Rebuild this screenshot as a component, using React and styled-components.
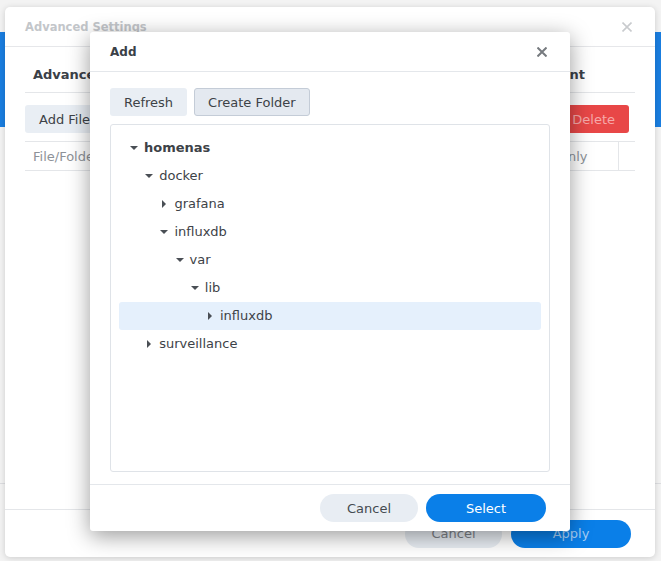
import React from 'react'
import styled, { createGlobalStyle } from 'styled-components'

const GlobalStyle = createGlobalStyle`
  html, body {
    margin: 0;
    padding: 0;
  }
  body {
    font-family: "DejaVu Sans", Verdana, sans-serif;
    font-size: 13px;
    color: #3d4247;
    background: #f3f3f3;
  }
`

const Desktop = styled.div`
  position: relative;
  width: 661px;
  height: 561px;
  overflow: hidden;
  background: #f3f3f3;
`

const Backdrop = styled.div`
  display: flex;
  flex-direction: column;
  height: 100%;
  padding-top: 32px;
  box-sizing: border-box;
`

const BlueBand = styled.div`
  height: 95px;
  background: #1a7ee0;
`

const BackdropRule = styled.div`
  margin-top: 356px;
  border-top: 1px solid #dcdde0;
`

const Window = styled.div`
  position: absolute;
  left: 5px;
  top: 7px;
  width: 650px;
  height: 550px;
  background: #fff;
  border-radius: 5px;
  box-shadow: 0 1px 6px rgba(0, 0, 0, 0.16);
  display: flex;
  flex-direction: column;
  overflow: hidden;
`

const WindowHeader = styled.div`
  height: 40px;
  box-sizing: border-box;
  border-bottom: 1px solid #e6e7ea;
  display: flex;
  align-items: center;
  justify-content: space-between;
  padding: 1px 23px 0 20px;
  flex-shrink: 0;
`

const WindowTitle = styled.div`
  font-size: 11.5px;
  font-weight: bold;
  color: #c3c6ca;
`

const WindowBody = styled.div`
  flex: 1;
  display: flex;
  flex-direction: column;
  padding: 0 20px;
`

const Tabs = styled.div`
  display: flex;
  justify-content: space-between;
  padding: 20px 50px 9px 8px;
  line-height: 16px;
  border-bottom: 1px solid #e4e6e9;
  font-weight: bold;
  color: #3a4047;
`

const Toolbar = styled.div`
  display: flex;
  justify-content: space-between;
  padding: 12px 6px 8px 0;
  border-bottom: 1px solid #e4e6e9;
`

const ToolGroup = styled.div`
  display: flex;
  gap: 7px;
`

const Button = styled.button`
  height: 28px;
  box-sizing: border-box;
  padding: 0 ${p => (p.$outlined ? 13 : 14)}px;
  border: ${p => (p.$outlined ? '1px solid #c4ccd7' : '0')};
  border-radius: 3px;
  font-family: inherit;
  font-size: 13px;
  background: ${p => (p.$danger ? '#e84747' : p.$outlined ? '#e4e9f0' : '#e9eef4')};
  color: ${p => (p.$danger ? '#f6a9a9' : '#3d4247')};
`

const GridHeader = styled.div`
  display: flex;
  height: 29px;
  box-sizing: border-box;
  border-bottom: 1px solid #e4e6e9;
  color: #8d9298;
`

const Cell = styled.div`
  flex: ${p => (p.$w ? `0 0 ${p.$w}px` : 1)};
  box-sizing: border-box;
  padding: 1px 8px 0;
  line-height: 28px;
  white-space: nowrap;
  overflow: hidden;
  border-left: ${p => (p.$divider ? '1px solid #e4e6e9' : '0')};
`

const Spacer = styled.div`
  flex: 1;
`

const WindowFooter = styled.div`
  height: 48px;
  box-sizing: border-box;
  border-top: 1px solid #e4e6e9;
  display: flex;
  justify-content: flex-end;
  align-items: center;
  gap: 9px;
  padding: 0 24px;
  flex-shrink: 0;
`

const Pill = styled.button`
  width: ${p => p.$w}px;
  height: 28px;
  border: 0;
  border-radius: 14px;
  font-family: inherit;
  font-size: 13px;
  background: ${p => (p.$primary ? '#0a7fe8' : '#e8edf3')};
  color: ${p => p.$color || (p.$primary ? '#fff' : '#444a50')};
`

const Modal = styled.div`
  position: absolute;
  left: 90px;
  top: 32px;
  width: 480px;
  height: 499px;
  background: #fff;
  border-radius: 3px;
  box-shadow: 0 5px 22px rgba(0, 0, 0, 0.4);
  display: flex;
  flex-direction: column;
`

const ModalHeader = styled(WindowHeader)`
  border-bottom-color: #e4e7eb;
`

const ModalTitle = styled.div`
  font-size: 12px;
  font-weight: bold;
  color: #3a4047;
`

const ModalBody = styled.div`
  flex: 1;
  min-height: 0;
  display: flex;
  flex-direction: column;
  gap: 8px;
  padding: 16px 20px 12px;
`

const TreeBox = styled.div`
  flex: 1;
  border: 1px solid #dfe3e8;
  border-radius: 3px;
  padding: 9px 0 7px;
`

const TreeRow = styled.div`
  display: flex;
  align-items: center;
  height: 28px;
  margin: 0 8px;
  padding-left: ${p => 11 + p.$level * 15.2}px;
  border-radius: 3px;
  background: ${p => (p.$selected ? '#e5f0fc' : 'transparent')};
`

const Caret = styled.span`
  width: 8px;
  display: flex;
  justify-content: center;
  margin-right: 6px;

  &::before {
    content: '';
    display: block;
    width: 0;
    height: 0;
    ${p => (p.$open
      ? `border-left: 4px solid transparent;
         border-right: 4px solid transparent;
         border-top: 4px solid #4a4f55;`
      : `border-top: 4px solid transparent;
         border-bottom: 4px solid transparent;
         border-left: 4px solid #4a4f55;`)}
  }
`

const Label = styled.span`
  font-weight: ${p => (p.$root ? 'bold' : 'normal')};
  color: #3d4247;
  line-height: 16px;
`

const ModalFooter = styled.div`
  height: 47px;
  box-sizing: border-box;
  border-top: 1px solid #e4e7eb;
  display: flex;
  justify-content: flex-end;
  align-items: center;
  gap: 8px;
  padding: 0 24px;
`

const CloseIcon = ({ color, width }) => (
  <svg width="10" height="10" viewBox="0 0 10 10">
    <path d="M0.5 0.5 L9.5 9.5 M9.5 0.5 L0.5 9.5" stroke={color} strokeWidth={width} />
  </svg>
)

const tree = [
  { name: 'homenas', level: 0, open: true },
  { name: 'docker', level: 1, open: true },
  { name: 'grafana', level: 2 },
  { name: 'influxdb', level: 2, open: true },
  { name: 'var', level: 3, open: true },
  { name: 'lib', level: 4, open: true },
  { name: 'influxdb', level: 5, selected: true },
  { name: 'surveillance', level: 1 },
]

export default function App() {
  return (
    <Desktop>
      <GlobalStyle />
      <Backdrop>
        <BlueBand />
        <BackdropRule />
      </Backdrop>

      <Window>
        <WindowHeader>
          <WindowTitle>Advanced Settings</WindowTitle>
          <CloseIcon color="#c9cbce" width={1.6} />
        </WindowHeader>
        <WindowBody>
          <Tabs>
            <span>Advanced Settings</span>
            <span>Volume</span>
            <span>Network</span>
            <span>Port Settings</span>
            <span>Links</span>
            <span>Environment</span>
          </Tabs>
          <Toolbar>
            <ToolGroup>
              <Button>Add File</Button>
              <Button>Add Folder</Button>
            </ToolGroup>
            <Button $danger>Delete</Button>
          </Toolbar>
          <GridHeader>
            <Cell>File/Folder</Cell>
            <Cell $w={200}>Mount path</Cell>
            <Cell $w={106}>Read-Only</Cell>
            <Cell $w={17} $divider />
          </GridHeader>
          <Spacer />
        </WindowBody>
        <WindowFooter>
          <Pill $w={97} $color="#7d8288">Cancel</Pill>
          <Pill $w={120} $primary $color="#a3cdf5">Apply</Pill>
        </WindowFooter>
      </Window>

      <Modal>
        <ModalHeader>
          <ModalTitle>Add</ModalTitle>
          <CloseIcon color="#767a7f" width={2} />
        </ModalHeader>
        <ModalBody>
          <ToolGroup>
            <Button>Refresh</Button>
            <Button $outlined>Create Folder</Button>
          </ToolGroup>
          <TreeBox>
            {tree.map((node, i) => (
              <TreeRow key={i} $level={node.level} $selected={node.selected}>
                <Caret $open={node.open} />
                <Label $root={node.level === 0}>{node.name}</Label>
              </TreeRow>
            ))}
          </TreeBox>
        </ModalBody>
        <ModalFooter>
          <Pill $w={98}>Cancel</Pill>
          <Pill $w={120} $primary>Select</Pill>
        </ModalFooter>
      </Modal>
    </Desktop>
  )
}
